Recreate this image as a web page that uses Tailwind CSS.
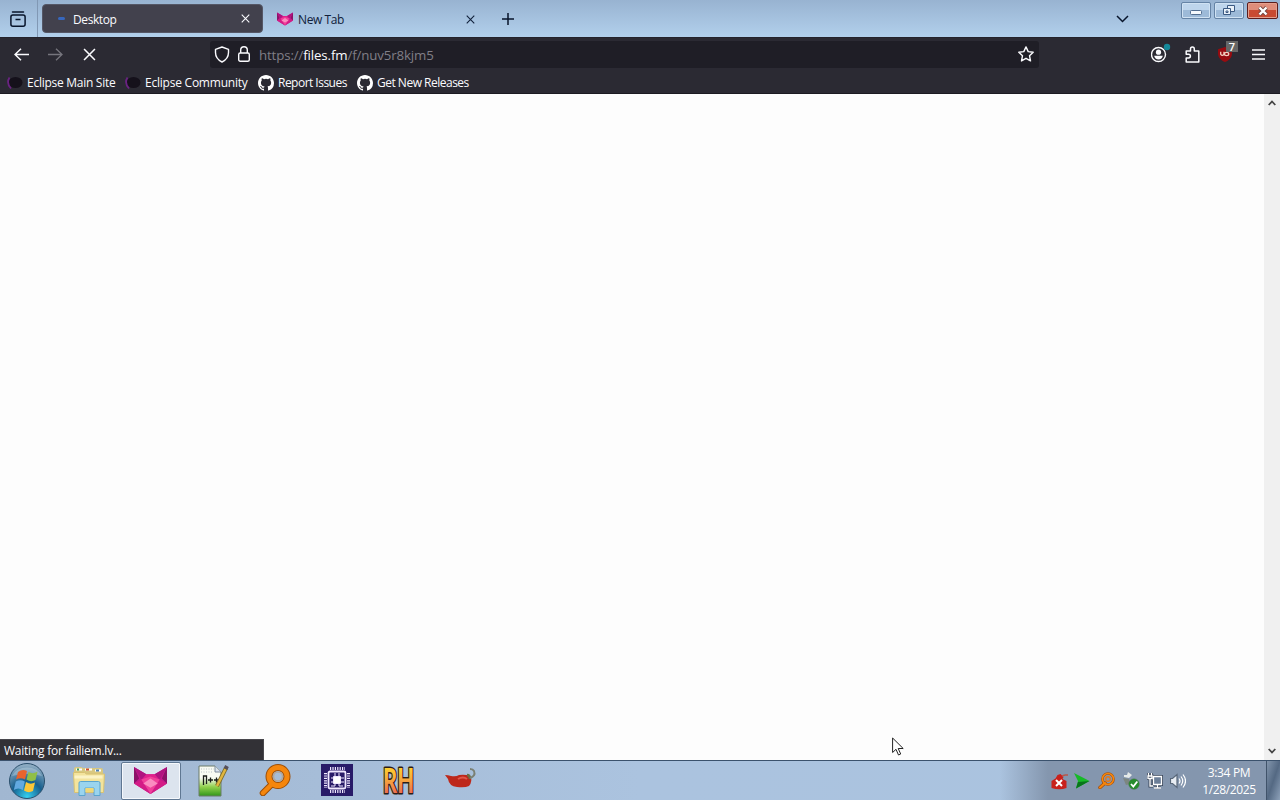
<!DOCTYPE html>
<html lang="en">

<head>
    <meta charset="UTF-8">
    <meta name="viewport" content="width=device-width, initial-scale=1.0">
    <title>Desktop</title>
    <script src="https://cdn.jsdelivr.net/npm/@tailwindcss/browser@4"></script>
</head>

<body class="w-[1280px] h-[800px] overflow-hidden flex flex-col bg-[#fdfdfd] font-['Open_Sans','Noto_Sans',sans-serif] text-[12px] leading-4">

    <!-- Shared symbols -->
    <svg class="hidden">
        <symbol id="fox" viewBox="0 0 32 26">
            <path fill="#c3188c" d="M0 0l12 7h8l12-7v16L16 26 0 16z" />
            <path fill="#8c1268" d="M0 0l5 11-5 5zM32 0l-5 11 5 5z" />
            <path fill="#b01480" d="M0 0l12 7-5 5zM32 0l-12 7 5 5z" />
            <path fill="#e0218c" d="M12 7h8l5 6H7z" />
            <path fill="#d31c86" d="M0 16l7-4 9 14zM32 16l-7-4-9 14z" />
            <path fill="#f0409a" d="M7 12l9-3 9 3-9 14z" />
            <path fill="#fa8cc0" d="M16 11l7 5-7 4-7-4z" />
        </symbol>
        <symbol id="github" viewBox="0 0 16 16">
            <path fill="#fff" d="M8 0C3.58 0 0 3.58 0 8c0 3.54 2.29 6.53 5.47 7.59.4.07.55-.17.55-.38v-1.49c-2.01.37-2.53-.49-2.69-.94-.09-.23-.48-.94-.82-1.13-.28-.15-.68-.52-.01-.53.63-.01 1.08.58 1.23.82.72 1.21 1.87.87 2.33.66.07-.52.28-.87.51-1.07-1.78-.2-3.64-.89-3.64-3.95 0-.87.31-1.59.82-2.15-.08-.2-.36-1.02.08-2.12 0 0 .67-.21 2.2.82a7.6 7.6 0 014 0c1.53-1.04 2.2-.82 2.2-.82.44 1.1.16 1.92.08 2.12.51.56.82 1.27.82 2.15 0 3.07-1.87 3.75-3.65 3.95.29.25.54.73.54 1.48v2.2c0 .21.15.46.55.38A8 8 0 0016 8c0-4.42-3.58-8-8-8z" />
        </symbol>
        <symbol id="eclipse" viewBox="0 0 16 16">
            <ellipse cx="8.500" cy="7.500" rx="7" ry="5.500" fill="#15111b" />
            <path d="M2.500 2.500Q-1 8 4 13.500" fill="none" stroke="#6a2282" stroke-width="1.800" />
        </symbol>
        <symbol id="cross" viewBox="0 0 10 10">
            <path d="M.8.8l8.400 8.400M9.200.8L.8 9.200" fill="none" stroke="currentColor" stroke-width="1.200" />
        </symbol>
        <symbol id="lens" viewBox="0 0 32 32">
            <path d="M13 20L4 29" stroke="#9c4e08" stroke-width="6.500" stroke-linecap="round" />
            <circle cx="19" cy="12.500" r="9" fill="none" stroke="#9c4e08" stroke-width="7" />
            <path d="M13 20L4 29" stroke="#f5860d" stroke-width="4.500" stroke-linecap="round" />
            <circle cx="19" cy="12.500" r="9" fill="none" stroke="#f5860d" stroke-width="5" />
            <circle cx="19" cy="12.500" r="4.500" fill="none" stroke="#b4a69a" stroke-width="1.500" />
        </symbol>
        <symbol id="lens-small" viewBox="0 0 17 17">
            <path d="M7 11l-5 4.500" stroke="#a44c0a" stroke-width="3.500" stroke-linecap="round" />
            <circle cx="10" cy="7" r="5.500" fill="none" stroke="#a44c0a" stroke-width="2.600" />
            <path d="M7 11l-5 4.500" stroke="#f5860d" stroke-width="2" stroke-linecap="round" />
            <circle cx="10" cy="7" r="5.500" fill="none" stroke="#f5860d" stroke-width="1.600" />
            <circle cx="10" cy="7" r="2.300" fill="none" stroke="#e5791a" stroke-width="1.400" />
        </symbol>
    </svg>

    <!-- Tab strip -->
    <header class="h-[37px] shrink-0 flex items-start bg-linear-to-b from-[#98b3d1] to-[#b2d0ec] text-[#10203a]">
        <div class="w-[38px] h-full pr-[2px] flex items-center justify-center border-r border-[#8198b4]">
            <svg class="w-4 h-4 mt-px" viewBox="0 0 16 16" fill="none" stroke="#08152b" stroke-width="1.500">
                <path d="M2.500 1h11" stroke-linecap="round" />
                <rect x=".9" y="4" width="14.200" height="11.200" rx="2" />
                <path d="M5.500 8.500h5" />
            </svg>
        </div>
        <div class="w-[221px] h-[29px] mt-[4px] ml-[4px] px-[12px] flex items-center rounded-[4px] bg-[#42414d] border border-[#555766] text-[#fbfbfe]">
            <span class="w-[7px] h-[3px] ml-[3px] rounded-full bg-[#3767bd]"></span>
            <span class="ml-[8px] mt-[3px] w-[168px] tracking-[-0.4px]">Desktop</span>
            <svg class="w-[9px] h-[9px] shrink-0"><use href="#cross" /></svg>
        </div>
        <div class="w-[223px] h-[30px] mt-[4px] pl-[14px] flex items-center">
            <svg class="w-4 h-[14px]"><use href="#fox" /></svg>
            <span class="ml-[5px] mt-[2px] w-[168px] tracking-[-0.4px]">New Tab</span>
            <svg class="w-[9px] h-[9px] shrink-0"><use href="#cross" /></svg>
        </div>
        <svg class="w-3 h-3 mt-[13px] ml-[16px]" viewBox="0 0 12 12"><path d="M6 0v12M0 6h12" stroke="#08152b" stroke-width="1.500" /></svg>
        <svg class="w-[13px] h-2 mt-[15px] ml-auto" viewBox="0 0 13 8"><path d="M1 1l5.500 5.500L12 1" fill="none" stroke="#08152b" stroke-width="1.500" /></svg>
        <!-- Window buttons -->
        <div class="flex gap-[3px] mt-[2px] ml-[52px] mr-[2px]">
            <div class="w-[30px] h-[17px] flex items-center justify-center rounded-[2px] border border-[#6583a5] bg-linear-to-b from-[#bed5ec] from-50% to-[#9dbad8] to-50% shadow-[inset_0_0_0_1px_#d0e2f3]">
                <svg class="w-3 h-[5px] mt-[4px]" viewBox="0 0 12 5"><rect x=".5" y=".5" width="11" height="4" rx="1" fill="#f5f9fd" stroke="#526e90" /></svg>
            </div>
            <div class="w-[30px] h-[17px] flex items-center justify-center rounded-[2px] border border-[#6583a5] bg-linear-to-b from-[#bed5ec] from-50% to-[#9dbad8] to-50% shadow-[inset_0_0_0_1px_#d0e2f3]">
                <svg class="w-3 h-[11px]" viewBox="0 0 12 11" fill="#e9f1f9" stroke="#3c5a82"><path d="M4.500.5h7v6h-7z" /><path d="M.5 3.500h7v6h-7z" /><path d="M3 6h2v1.500H3z" /></svg>
            </div>
            <div class="w-[31px] h-[17px] flex items-center justify-center rounded-[2px] border border-[#5c1d1c] bg-linear-to-b from-[#df8d7a] from-50% to-[#c84b32] to-50% shadow-[inset_0_0_0_1px_#e3a08e]">
                <svg class="w-3 h-[10px]" viewBox="0 0 12 10"><path d="M2.500 1.500l7 7M9.500 1.500l-7 7" stroke="#70443f" stroke-width="4" /><path d="M2.500 1.500l7 7M9.500 1.500l-7 7" stroke="#fff" stroke-width="2.400" /></svg>
            </div>
        </div>
    </header>

    <!-- Navigation bar -->
    <nav class="h-[34px] shrink-0 flex items-center bg-[#2b2a33] border-t border-[#24232c] text-[#fbfbfe]">
        <svg class="w-[15px] h-[13px] ml-[14px]" viewBox="0 0 15 13" fill="none" stroke="#fbfbfe" stroke-width="1.500"><path d="M15 6.500H1M7 .8L1 6.500l6 5.700" /></svg>
        <svg class="w-[15px] h-[13px] ml-[19px]" viewBox="0 0 15 13" fill="none" stroke="#76757d" stroke-width="1.300"><path d="M0 6.500h14M8 .8l6 5.700-6 5.700" /></svg>
        <svg class="w-[13px] h-[13px] ml-[20px]"><use href="#cross" /></svg>
        <div class="w-[829px] h-[27px] ml-[114px] pl-[4px] pr-[5px] flex items-center rounded-[3px] bg-[#1f1e26]">
            <svg class="w-4 h-[17px] -mt-px" viewBox="0 0 16 17" fill="none" stroke="#fbfbfe" stroke-width="1.400"><path d="M8 1l6.500 2.300v3.200c0 4.500-2.500 7.500-6.500 9.500-4-2-6.500-5-6.500-9.500V3.300z" stroke-linejoin="round" /></svg>
            <svg class="w-3 h-4 ml-[8px] -mt-px" viewBox="0 0 12 16" fill="none" stroke="#fbfbfe" stroke-width="1.400"><rect x=".7" y="7" width="10.600" height="8.200" rx="1.500" /><path d="M2.700 7V4a3.300 3.300 0 016.600 0v3" /></svg>
            <span class="ml-[9px] mt-px text-[13.300px] text-[#807f87] tracking-[-0.140px]">https://<span class="text-[#fbfbfe]">files.fm</span>/f/nuv5r8kjm5</span>
            <svg class="w-4 h-4 ml-auto -mt-px" viewBox="0 0 16 16" fill="none" stroke="#fbfbfe" stroke-width="1.400"><path d="M8 .9l2.200 4.700 5 .6-3.700 3.500 1 5.200L8 12.300l-4.500 2.600 1-5.200L.8 6.200l5-.6z" stroke-linejoin="round" /></svg>
        </div>
        <svg class="w-5 h-5 ml-[112px] -mt-[3px]" viewBox="0 0 20 20">
            <circle cx="7.500" cy="11.500" r="7" fill="none" stroke="#fbfbfe" stroke-width="1.400" />
            <circle cx="7.500" cy="9.200" r="2.600" fill="#fbfbfe" />
            <path d="M3.200 12.800h8.600c-.3 2.300-2 3.700-4.300 3.700s-4-1.400-4.300-3.700z" fill="#fbfbfe" />
            <circle cx="16" cy="4" r="3.200" fill="#14889a" />
        </svg>
        <svg class="w-[15px] h-[17px] ml-[14px] -mt-px" viewBox="0 0 15 17" fill="none" stroke="#fbfbfe" stroke-width="1.500"><path d="M1.200 16V12h2.300a1.900 1.900 0 000-3.800H1.200V5h4.300V3a1.900 1.900 0 013.800 0v2h4.500v11z" stroke-linejoin="round" /></svg>
        <div class="relative ml-[18px] w-[14px] h-[15px]">
            <svg class="w-[14px] h-[15px]" viewBox="0 0 13 14"><path d="M6.500 0L13 2v4c0 4-3 6.500-6.500 8C3 12.500 0 10 0 6V2z" fill="#970b10" /><path d="M2.500 4.500v2.300q1.500 2 3 0V4.500M6 6.500a2 1.500 0 104 0 2 1.500 0 10-4 0z" fill="none" stroke="#f3cfc0" stroke-width="1.200" /></svg>
            <span class="absolute left-[8px] -top-[6px] w-[12px] h-[11px] bg-[#666] text-white text-[11px] leading-[11px] font-semibold text-center">7</span>
        </div>
        <svg class="w-[13px] h-[11px] ml-[20px] -mt-px" viewBox="0 0 13 11"><path d="M0 1h13M0 5.500h13M0 10h13" stroke="#fbfbfe" stroke-width="1.400" /></svg>
    </nav>

    <!-- Bookmarks -->
    <div class="h-[23px] shrink-0 pl-[7px] pt-px flex items-center bg-[#2b2a33] border-b border-[#1c1b22] text-[#fbfbfe] whitespace-nowrap">
        <svg class="w-4 h-4"><use href="#eclipse" /></svg>
        <span class="ml-[4px] mt-px w-[98px] tracking-[-0.270px]">Eclipse Main Site</span>
        <svg class="w-4 h-4"><use href="#eclipse" /></svg>
        <span class="ml-[4px] mt-px w-[113px] tracking-[-0.230px]">Eclipse Community</span>
        <svg class="w-4 h-4"><use href="#github" /></svg>
        <span class="ml-[4px] mt-px w-[79px] tracking-[-0.520px]">Report Issues</span>
        <svg class="w-4 h-4"><use href="#github" /></svg>
        <span class="ml-[4px] mt-px tracking-[-0.500px]">Get New Releases</span>
    </div>

    <!-- Page -->
    <main class="flex-1 flex justify-between items-end">
        <div class="w-[264px] h-[21px] px-[4px] pt-[2px] flex items-center bg-[#323136] border-t border-r border-[#48474c] text-[#fbfbfe] tracking-[-0.240px]">Waiting for failiem.lv...</div>
        <div class="w-[16px] h-full pr-px flex flex-col items-center justify-between py-[6px] bg-[#f0f0f0]">
            <svg class="w-2 h-[6px]" viewBox="0 0 8 6"><path d="M.7 5L4 1.500 7.300 5" fill="none" stroke="#444" stroke-width="1.800" /></svg>
            <svg class="w-2 h-[6px]" viewBox="0 0 8 6"><path d="M.7 1L4 4.500 7.300 1" fill="none" stroke="#444" stroke-width="1.800" /></svg>
        </div>
    </main>

    <!-- Taskbar -->
    <footer class="h-10 shrink-0 flex items-center border-t border-[#3b526d] bg-linear-to-r from-[#a1b7d1] via-[#abc3df] to-[#aac3df]">
        <svg class="w-[38px] h-[38px] ml-[8px]" viewBox="0 0 38 38">
            <defs>
                <radialGradient id="orb" cx=".5" cy=".95" r=".9">
                    <stop offset="0" stop-color="#35d0f0" />
                    <stop offset=".5" stop-color="#165f8e" />
                    <stop offset="1" stop-color="#8dabc2" />
                </radialGradient>
            </defs>
            <circle cx="19" cy="19" r="17.500" fill="url(#orb)" stroke="#2b506d" />
            <path d="M4 14a16 13 0 0130 0q-14-4-30 0z" fill="#fff" opacity=".25" />
            <path d="M10 10q4.500-3.500 9-1l-2 8.500q-4.500-2.500-9 0z" fill="#e8642d" />
            <path d="M20.500 10q4.500 2.500 9-.5l-2 8.500q-4.500 2.500-9-.5z" fill="#90bf46" />
            <path d="M7.800 19.500q4.500-2.500 9 0l-2 8.500q-4.500-3-9 0z" fill="#62a9e0" />
            <path d="M18 20q4.500 3 9 .5l-2 8.500q-4.500 2.500-9-.5z" fill="#fbc637" />
        </svg>
        <svg class="w-8 h-8 ml-[27px]" viewBox="0 0 32 32">
            <path d="M1 4q0-2 2-2h5l2 1h18q2 0 2 2v6H1z" fill="#d9c880" />
            <path d="M3 4.500h6M12 4.500h7M22 5.500h6" stroke="#fff" stroke-width="2" />
            <path d="M4 4.500h2" stroke="#3d9b58" stroke-width="2" />
            <path d="M13 4.500h3" stroke="#cb5031" stroke-width="2" />
            <path d="M23 5.500h3" stroke="#4d80b5" stroke-width="2" />
            <path d="M.5 7.500h11l2 1.500h18l-1 18.500h-29z" fill="#f3e39c" stroke="#d8c272" />
            <path d="M1.500 12h28" stroke="#fbf3c6" stroke-width="3" />
            <path d="M6 30.500V18q0-1.500 1.500-1.500h18q1.500 0 1.500 1.500v12.500h-6V23h-9v7.500z" fill="#9ad4ee" stroke="#5aa5cf" />
            <path d="M12.500 23h8v4h-8z" fill="#efd877" />
        </svg>
        <div class="w-[60px] h-[38px] ml-[16px] pr-px flex items-center justify-center rounded-[2px] border border-[#5f7792] bg-[#dce4ee] shadow-[inset_0_0_0_1px_#f5f8fc]">
            <svg class="w-[33px] h-[27px]"><use href="#fox" /></svg>
        </div>
        <svg class="w-8 h-8 ml-[16px]" viewBox="0 0 32 32">
            <defs>
                <linearGradient id="pad" x2="0" y2="1"><stop offset=".4" stop-color="#f8fbf2" /><stop offset=".7" stop-color="#8fd04b" /><stop offset="1" stop-color="#31961b" /></linearGradient>
            </defs>
            <path d="M2 1h16l6 6v24H2z" fill="url(#pad)" stroke="#6b7b69" />
            <path d="M18 1v6h6" fill="#d9e2ee" stroke="#7e8d9c" />
            <path d="M4 4h13M4 7h11" stroke="#b9c0c7" stroke-dasharray="1 1.500" />
            <path d="M6.500 20V11h3v8M11 15h5M13.500 12.500v5M17 15h5M19.500 12.500v5" fill="none" stroke="#1b1f1b" stroke-width="1.300" />
            <path d="M29 3L20 21" stroke="#7a6a2c" stroke-width="4" />
            <path d="M28.500 4L20 21" stroke="#e0b63e" stroke-width="2.500" />
            <path d="M30 1l-1.500 3" stroke="#56505b" stroke-width="4" />
        </svg>
        <svg class="w-8 h-8 ml-[30px] -mt-[2px]"><use href="#lens" /></svg>
        <svg class="w-8 h-8 ml-[30px] -mt-[2px]" viewBox="0 0 32 32" fill="none" stroke="#f0e8ff">
            <path d="M0 0h32v32H0z" fill="#281a68" stroke="none" />
            <path d="M9 4.500h15M9 27.500h15" stroke-width="3" stroke-dasharray="1.200 1.200" />
            <path d="M4.500 9v15M27.500 9v15" stroke-width="3" stroke-dasharray="1.200 1.200" />
            <rect x="7.500" y="7.500" width="17" height="17" rx="1.500" stroke-width="1.800" />
            <path d="M12.500 12.500h7v7h-7z" fill="#fff" />
            <path d="M14 9v3M18 9v3M10 14h2M10 18h2M20 14h3M20 18h3M10 22h4v-2M22 22h-4v-2" />
        </svg>
        <svg class="w-8 h-8 ml-[30px] overflow-visible" viewBox="0 0 32 32">
            <defs>
                <linearGradient id="rh" x2="0" y2="1"><stop offset=".2" stop-color="#ffd22e" /><stop offset=".5" stop-color="#f6a83e" /><stop offset=".8" stop-color="#ef7350" /></linearGradient>
            </defs>
            <text x="0" y="28" textLength="31" lengthAdjust="spacingAndGlyphs" class="font-['Lato','Open_Sans',sans-serif] font-black text-[34px] leading-none" fill="url(#rh)" stroke="#2c1d16" stroke-width="3" paint-order="stroke" stroke-linejoin="round">RH</text>
        </svg>
        <svg class="w-8 h-8 ml-[30px]" viewBox="0 0 32 32">
            <path d="M0 10q3 0 6 1 5 1 8-1 6-1 11 1 3 5-1 10-4 2-12 1Q4 21 3 14z" fill="#bd281b" />
            <path d="M13 14q5-3 9 0" stroke="#e0584a" stroke-width="2" fill="none" />
            <path d="M22 10q3 0 3 4" stroke="#6b7046" stroke-width="2.500" fill="none" />
            <path d="M25 13q6-2 4-7-1-2-4-2" stroke="#7b8073" stroke-width="2" fill="none" />
        </svg>

        <!-- Tray -->
        <div class="flex-1 h-full ml-[523px] pl-[50px] flex items-center bg-linear-to-r from-transparent to-[#8496ae] to-[48px]">
            <svg class="w-[18px] h-[18px]" viewBox="0 0 18 18">
                <path d="M1.500 16V9l4-2.500L7.500 3l3-1 3 3-1 2 4 2v7q-7 2.500-15 0z" fill="#c8211c" /><path d="M12 4l3-1M15 3h3" stroke="#b8564a" stroke-width="1.500" />
                <path d="M6 8l6 6M12 8l-6 6" stroke="#fff" stroke-width="2" />
            </svg>
            <svg class="w-4 h-4 ml-[6px]" viewBox="0 0 16 16"><path d="M0 0l15.500 8L2 15.500 4 8z" fill="#16ba27" /><path d="M4 9l11.500-1L2 15.500z" fill="#08751b" /></svg>
            <svg class="w-[17px] h-[17px] ml-[8px]"><use href="#lens-small" /></svg>
            <svg class="w-[18px] h-[18px] ml-[7px]" viewBox="0 0 18 18">
                <path d="M6 0l4 3-3 3-5-1v-2h3z" fill="#e4e9e8" /><path d="M1 6l6 1 1 5-4 1z" fill="#7c8681" />
                <circle cx="12" cy="12" r="5.300" fill="#278c2c" stroke="#56745c" stroke-width=".5" /><path d="M9 12l2.300 2.500 4-5" stroke="#fff" stroke-width="1.800" fill="none" />
            </svg>
            <svg class="w-4 h-4 ml-[7px]" viewBox="0 0 16 16" fill="none">
                <path d="M6.500 3.500h8v8h-8zM10.500 12v2.500M7 15h7M1.500 0v3M4.500 0v3M1 3h4v2.500H1zM3 6v7h3" stroke="#39465a" stroke-width="3" />
                <path d="M6.500 3.500h8v8h-8z" fill="#6c7f98" />
                <path d="M6.500 3.500h8v8h-8zM10.500 12v2.500M7 15h7M1.500 0v3M4.500 0v3M1 3h4v2.500H1zM3 6v7h3" stroke="#fff" stroke-width="1.300" />
            </svg>
            <svg class="w-4 h-4 ml-[7px]" viewBox="0 0 16 16" fill="none" stroke="#fff" stroke-width="1.200"><path d="M.5 5.500h2L7 1.500v13l-4.500-4h-2z" fill="#e8edf3" stroke="#586779" /><path d="M9 5.500q2 2.500 0 5M11 3.500q3.500 4.500 0 9M13 1.500q5 6.500 0 13" /></svg>
            <div class="w-[60px] ml-[13px] flex flex-col items-center text-white leading-[17px] tracking-[-0.350px]">
                <span>3:34 PM</span>
                <span>1/28/2025</span>
            </div>
            <div class="w-[14px] h-full ml-auto border-l border-[#40536a] bg-linear-to-br from-[#8295ac] via-[#546983] to-[#8da1b9]"></div>
        </div>
    </footer>

    <!-- Mouse pointer -->
    <svg class="absolute left-[892px] top-[737px] w-3 h-[19px]" viewBox="0 0 12 19"><path d="M.6 1v14.500L4 12.300l2.500 5.700 2.200-1-2.500-5.500h5z" fill="#fff" stroke="#222" /></svg>
</body>

</html>
